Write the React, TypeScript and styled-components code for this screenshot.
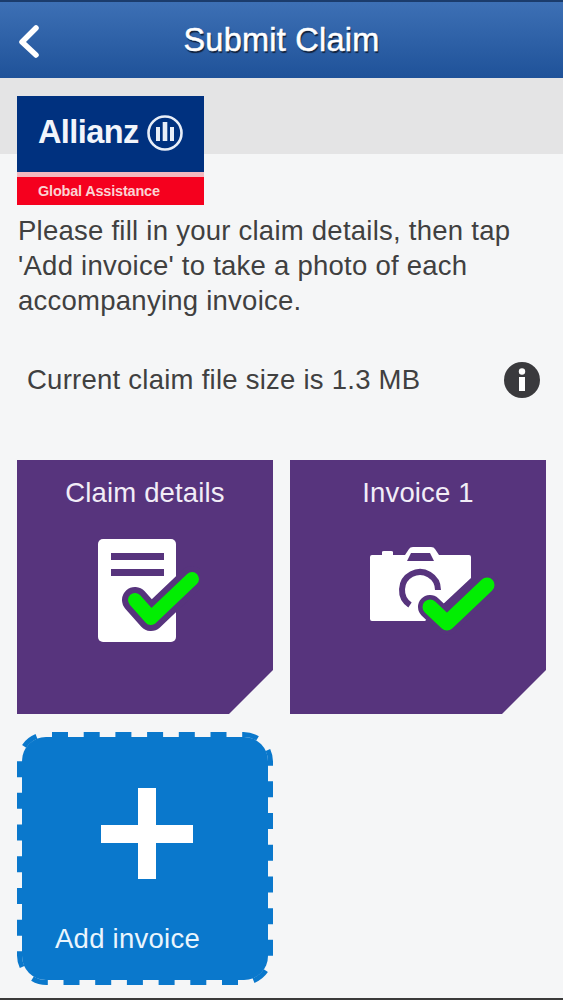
import React from "react";
import styled, { createGlobalStyle } from "styled-components";

const Global = createGlobalStyle`
  html, body { margin: 0; padding: 0; background: #f5f6f7; }
  body { font-family: "Liberation Sans", Arial, sans-serif; }
  * { box-sizing: border-box; }
`;
const Page = styled.div`
  width: 563px; height: 1000px; display: flex; flex-direction: column; overflow: hidden;
  border-bottom: 2px solid #3a3a3a;
`;
const Header = styled.header`
  height: 78px; flex: none; display: flex; align-items: center; justify-content: center; position: relative;
  background: linear-gradient(#3d70b5, #1f5299);
  border-top: 2px solid #1b3c6c;
`;
const Back = styled.svg`
  position: absolute; left: 16px; top: 20px;
`;
const Title = styled.h1`
  margin: 0; font-size: 32.5px; font-weight: 400; color: #fff; letter-spacing: 0.25px;
  -webkit-text-stroke: 0.5px #fff;
  text-shadow: 1px 2px 1px #10203a;
`;
const Main = styled.main`
  flex: 1; padding: 18px 17px 0;
  background: linear-gradient(#e4e4e5 0, #e4e4e5 76px, #f5f6f7 76px);
`;
const Logo = styled.div`
  width: 187px; height: 109px; display: flex; flex-direction: column; background: #f3b9c0;
`;
const LogoTop = styled.div`
  height: 76px; background: #00317f; display: flex; align-items: center; padding: 0 0 3px 21px; gap: 7px; color: #fff;
`;
const LogoName = styled.span`
  font-size: 32.5px; font-weight: 700; letter-spacing: -0.6px; color: #f2f5fb;
`;
const LogoBottom = styled.div`
  height: 28px; margin-top: 5px; background: #f5001e; display: flex; align-items: center; padding-left: 21px;
  font-size: 14.5px; font-weight: 700; letter-spacing: -0.2px; color: #fbd3d3;
`;
const Intro = styled.p`
  margin: 8px 0 0 1px; font-size: 27.5px; line-height: 35px; color: #404040; letter-spacing: 0.25px; width: 530px;
`;
const InfoRow = styled.div`
  margin-top: 42px; height: 40px; display: flex; align-items: center; justify-content: space-between; padding: 0 6px 0 10px;
  font-size: 27.5px; color: #404040; letter-spacing: 0.25px;
`;
const Tiles = styled.div`
  margin-top: 60px; display: grid; grid-template-columns: 256px 256px; column-gap: 17px; row-gap: 18px;
`;
const Tile = styled.div`
  height: 254px; background: #57347d; color: #f2edf7; display: flex; flex-direction: column; align-items: center;
  clip-path: polygon(0 0, 100% 0, 100% 210px, 212px 100%, 0 100%);
  padding-top: 16px;
`;
const TileLabel = styled.div`
  font-size: 27.5px; line-height: 33px; letter-spacing: 0.15px;
`;
const TileIcon = styled.svg`
  margin-top: 21px; flex: none;
`;
const AddTile = styled.div`
  position: relative; width: 256px; height: 253px; color: #eaf5fd; display: flex; flex-direction: column;
`;
const AddBackdrop = styled.svg`
  position: absolute; inset: 0;
`;
const AddPlus = styled.svg`
  position: relative; margin: 56px 0 0 84px;
`;
const AddLabel = styled.div`
  position: relative; margin: 42px 0 0 38px; font-size: 27.5px; line-height: 36px; letter-spacing: 0.25px;
`;

const PURPLE = "#57347d";
const GREEN = "#02ee02";

const Check = ({ points, halo, width }: { points: string; halo: number; width: number }) => (
  <>
    <polyline points={points} fill="none" stroke={PURPLE} strokeWidth={halo} strokeLinecap="round" strokeLinejoin="round" />
    <polyline points={points} fill="none" stroke={GREEN} strokeWidth={width} strokeLinecap="round" strokeLinejoin="round" />
  </>
);

export default function App() {
  return (
    <Page>
      <Global />
      <Header>
        <Back width="28" height="40" viewBox="0 0 28 40">
          <polyline points="20,6 6,20 20,33" fill="none" stroke="#fff" strokeWidth="5.5" strokeLinecap="round" strokeLinejoin="round" />
        </Back>
        <Title>Submit Claim</Title>
      </Header>
      <Main>
        <Logo>
          <LogoTop>
            <LogoName>Allianz</LogoName>
            <svg width="38" height="38" viewBox="0 0 38 38">
              <circle cx="19" cy="19" r="16.5" fill="none" stroke="#e8eef8" strokeWidth="2.6" />
              <rect x="10" y="13" width="4" height="14" fill="#e8eef8" />
              <rect x="16.7" y="8" width="4.6" height="19" fill="#e8eef8" />
              <rect x="24" y="13" width="4" height="14" fill="#e8eef8" />
            </svg>
          </LogoTop>
          <LogoBottom>Global Assistance</LogoBottom>
        </Logo>
        <Intro>
          Please fill in your claim details, then tap 'Add invoice' to take a photo of each accompanying invoice.
        </Intro>
        <InfoRow>
          <span>Current claim file size is 1.3 MB</span>
          <svg width="36" height="36" viewBox="0 0 36 36">
            <circle cx="18" cy="18" r="18" fill="#3a3a3d" />
            <circle cx="18" cy="9.5" r="3.2" fill="#fff" />
            <rect x="15" y="15" width="6" height="14" fill="#fff" />
          </svg>
        </InfoRow>
        <Tiles>
          <Tile>
            <TileLabel>Claim details</TileLabel>
            <TileIcon width="110" height="120" viewBox="90 530 110 120">
              <rect x="98" y="539" width="78" height="103" rx="5" fill="#fff" />
              <rect x="111" y="553" width="53" height="7" fill={PURPLE} />
              <rect x="111" y="569" width="53" height="7" fill={PURPLE} />
              <Check points="135,600 151,618 192,579" halo={26} width={14} />
            </TileIcon>
          </Tile>
          <Tile>
            <TileLabel>Invoice 1</TileLabel>
            <TileIcon width="160" height="110" viewBox="338 530 160 110">
              <path d="M372 555 H382 V552 Q382 551 384 551 H391 Q393 551 393 552 V555 H405 L409 549 Q410 547 413 547 H431 Q434 547 435 549 L439 555 H469 Q471 555 471 557 V578 L425 621 H372 Q370 621 370 619 V557 Q370 555 372 555 Z" fill="#fff" />
              <path d="M407 561 L411 553 H430 L434 561 Z" fill={PURPLE} />
              <path d="M410 605 A18 18 0 1 1 438 590" fill="none" stroke={PURPLE} strokeWidth="6" />
              <Check points="430,607 447,623 487,585" halo={24} width={15} />
            </TileIcon>
          </Tile>
          <AddTile>
            <AddBackdrop width="256" height="253" viewBox="0 0 256 253">
              <rect x="5" y="5" width="246" height="243" rx="24" fill="#0a78cc" />
              <rect x="2.5" y="2.5" width="251" height="248" rx="27" fill="none" stroke="#0a78cc" strokeWidth="5" strokeDasharray="16 15.7" strokeDashoffset="-5.5" />
            </AddBackdrop>
            <AddPlus width="92" height="91" viewBox="0 0 92 91">
              <rect x="37" y="0" width="18" height="91" fill="#fff" />
              <rect x="0" y="37" width="92" height="18" fill="#fff" />
            </AddPlus>
            <AddLabel>Add invoice</AddLabel>
          </AddTile>
        </Tiles>
      </Main>
    </Page>
  );
}
